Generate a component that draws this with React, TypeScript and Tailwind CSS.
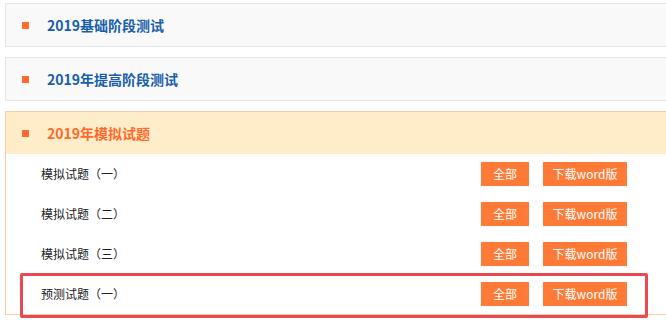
const font = { fontFamily: '"Noto Sans CJK SC", "Liberation Sans", sans-serif' };

const rows = ['模拟试题（一）', '模拟试题（二）', '模拟试题（三）', '预测试题（一）'];

function Bullet() {
  return <span className="block h-[7px] w-[7px] shrink-0 bg-[#ff6a30]" />;
}

function ClosedPanel({ title }: { title: string }) {
  return (
    <div className="flex h-[44px] w-[680px] items-center border border-[#e6e6e6] bg-[#f9f9f9] pl-[16px]">
      <Bullet />
      <span className="ml-[18px] text-[14px] font-bold text-[#1a5fab]">{title}</span>
    </div>
  );
}

export default function App() {
  return (
    <div className="relative h-[322px] w-[666px] overflow-hidden bg-white" style={font}>
      <div className="flex flex-col gap-[10px] pl-[5px] pt-[3px]">
        <ClosedPanel title="2019基础阶段测试" />
        <ClosedPanel title="2019年提高阶段测试" />

        {/* open panel */}
        <div className="w-[680px] border border-[#f8cbaa]">
          <div className="flex h-[42px] items-center bg-[#ffedc9] pl-[16px]">
            <Bullet />
            <span className="ml-[18px] text-[14px] font-bold text-[#fe6a2b]">2019年模拟试题</span>
          </div>
          {rows.map((r) => (
            <div key={r} className="flex h-[40px] items-center pl-[35px] pr-[57px]">
              <span className="text-[12px] text-[#222]">{r}</span>
              <div className="ml-auto flex gap-[14px]">
                <button className="h-[24px] w-[48px] bg-[#fe7a36] text-[12px] text-white">全部</button>
                <button className="h-[24px] w-[84px] bg-[#fe7a36] text-[12px] text-white">下载word版</button>
              </div>
            </div>
          ))}
        </div>
      </div>

      {/* highlight annotation */}
      <div className="absolute left-[20px] top-[273px] h-[45px] w-[628px] rounded-[2px] border-[3px] border-[#ea4a4e]" />
    </div>
  );
}
